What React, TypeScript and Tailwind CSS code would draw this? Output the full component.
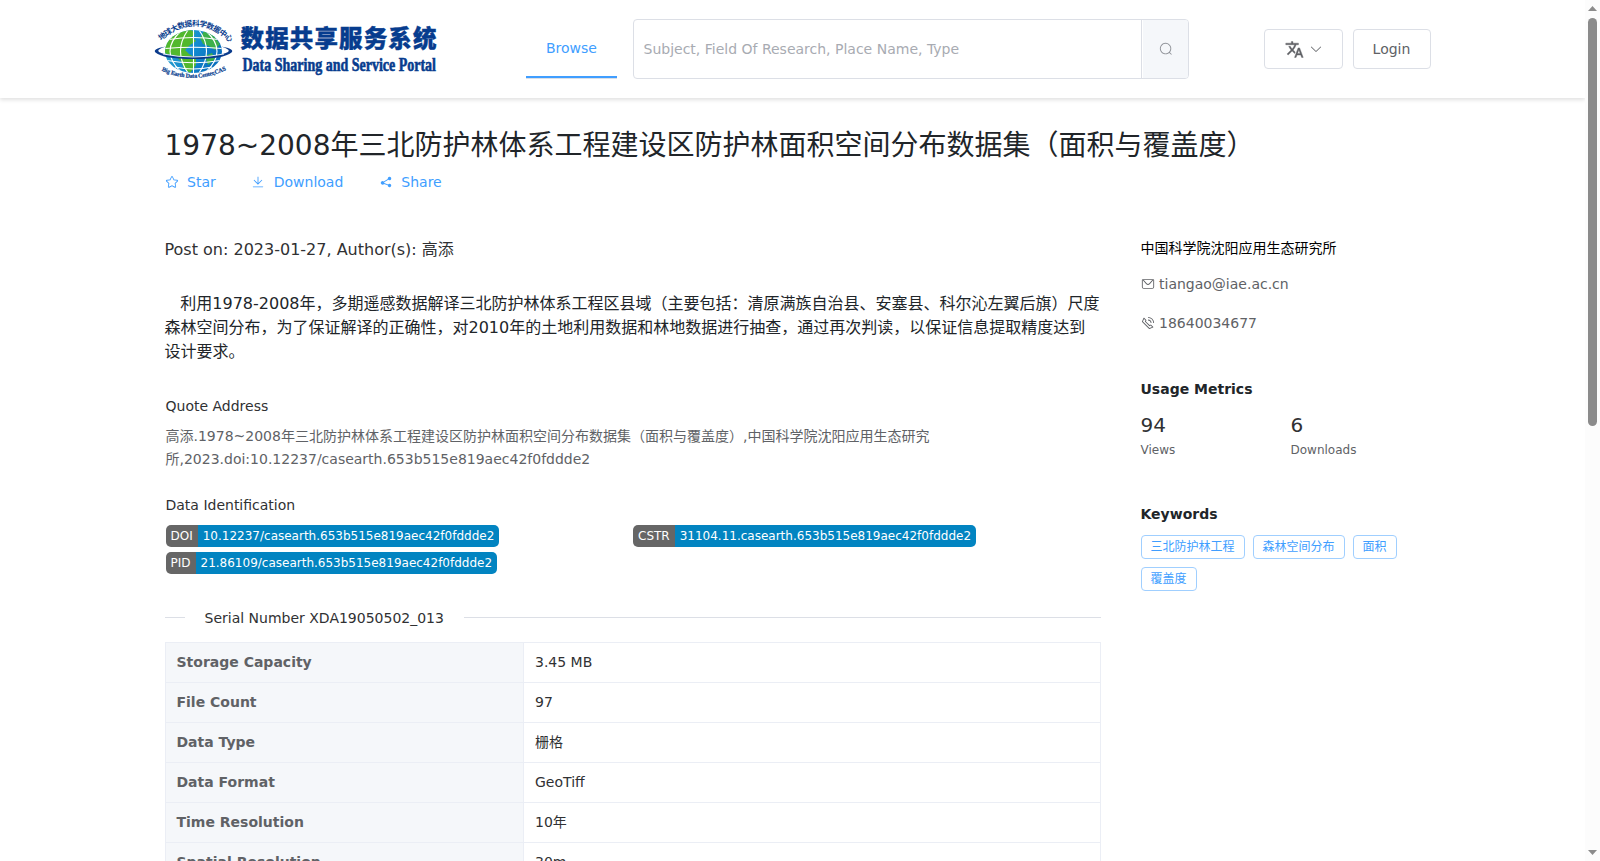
import React from 'react';

interface IconProps {
  d: string[];
  className?: string;
}

const icons = {
  search: ['m795.904 750.72 124.992 124.928a32 32 0 0 1-45.248 45.248L750.656 795.904a416 416 0 1 1 45.248-45.248zM480 832a352 352 0 1 0 0-704 352 352 0 0 0 0 704z'],
  arrowDown: ['M831.872 340.864 512 652.672 192.128 340.864a30.592 30.592 0 0 0-42.752 0 29.12 29.12 0 0 0 0 41.6L489.664 714.24a32 32 0 0 0 44.672 0l340.288-331.712a29.12 29.12 0 0 0 0-41.728 30.592 30.592 0 0 0-42.752 0z'],
  star: ['m512 747.84 228.16 119.936a6.4 6.4 0 0 0 9.28-6.72l-43.52-254.08 184.512-179.904a6.4 6.4 0 0 0-3.52-10.88l-255.104-37.12L517.76 147.904a6.4 6.4 0 0 0-11.52 0L392.192 379.072l-255.104 37.12a6.4 6.4 0 0 0-3.52 10.88L318.08 606.976l-43.584 254.08a6.4 6.4 0 0 0 9.28 6.72L512 747.84zM313.6 924.48a70.4 70.4 0 0 1-102.144-74.24l37.888-220.928L88.96 472.96A70.4 70.4 0 0 1 128 352.896l221.76-32.256 99.2-200.96a70.4 70.4 0 0 1 126.208 0l99.2 200.96 221.824 32.256a70.4 70.4 0 0 1 39.04 120.064L774.72 629.376l37.888 220.928a70.4 70.4 0 0 1-102.144 74.24L512 820.096l-198.4 104.32z'],
  download: ['M160 832h704a32 32 0 1 1 0 64H160a32 32 0 1 1 0-64zm384-253.696 236.288-236.352 45.248 45.248L508.8 704 192 387.2l45.248-45.248L480 584.704V128h64v450.304z'],
  share: ['m679.872 348.8-301.76 188.608a127.808 127.808 0 0 1 5.12 52.16l279.936 104.96a128 128 0 1 1-22.464 59.904l-279.872-104.96a128 128 0 1 1-16.64-166.272l301.696-188.608a128 128 0 1 1 33.92 54.272z'],
  message: [
    'M128 224v512a64 64 0 0 0 64 64h640a64 64 0 0 0 64-64V224H128zm0-64h768a64 64 0 0 1 64 64v512a128 128 0 0 1-128 128H192A128 128 0 0 1 64 736V224a64 64 0 0 1 64-64z',
    'M904 224 656.512 506.88a192 192 0 0 1-289.024 0L120 224h784zm-698.944 0 210.56 240.704a128 128 0 0 0 192.704 0L818.944 224H205.056z',
  ],
  phone: ['M79.36 432.256 591.744 944.64a32 32 0 0 0 35.2 6.784l253.44-108.544a32 32 0 0 0 9.984-52.032l-153.856-153.92a32 32 0 0 0-36.928-6.016l-69.888 34.944L358.08 394.24l35.008-69.888a32 32 0 0 0-5.952-36.928L233.152 133.568a32 32 0 0 0-52.032 10.048L72.512 397.056a32 32 0 0 0 6.784 35.2zm60.48-29.952 81.536-190.08L325.568 316.48l-24.64 49.216-20.608 41.216 32.576 32.64 271.552 271.552 32.64 32.64 41.216-20.672 49.28-24.576 104.192 104.128-190.08 81.472L139.84 402.304zM512 320v-64a256 256 0 0 1 256 256h-64a192 192 0 0 0-192-192zm0-192V64a448 448 0 0 1 448 448h-64a384 384 0 0 0-384-384z'],
};

const Icon: React.FC<IconProps> = ({ d, className }) => (
  <svg viewBox="0 0 1024 1024" fill="currentColor" className={`h-3.5 w-3.5 shrink-0 ${className ?? ''}`}>
    {d.map((path) => (
      <path key={path} d={path} />
    ))}
  </svg>
);

const Logo: React.FC = () => (
  <svg width="284" height="64" viewBox="0 0 284 64" className="shrink-0 overflow-visible">
    <defs>
      <linearGradient id="sea" x1="0" x2="1" y1="0" y2="0.4">
        <stop offset="0" stopColor="#2fa8c8" />
        <stop offset="0.6" stopColor="#128bd0" />
        <stop offset="1" stopColor="#0a6fbd" />
      </linearGradient>
      <clipPath id="globe">
        <ellipse cx="38.5" cy="34.5" rx="28.5" ry="21.5" />
      </clipPath>
      <path id="arcTop" d="M6 24 Q 38.5 -5 71 22 L 80 29.5" />
      <path id="arcBottom" d="M6.5 53.5 Q 38 68.5 71 53 L 80 48" />
    </defs>

    {/* Globe */}
    <ellipse cx="38.5" cy="34.5" rx="28.5" ry="21.5" fill="url(#sea)" />
    <g clipPath="url(#globe)">
      <path d="M8 35 L12 22 L22 14 L35 12 L40 16 L37 20 L41 24 L35 28 L30 33 L34 37 L41 41 L41 48 L35 56 L29 52 L26 44 L19 38 L12 37Z" fill="#52b82c" />
      <path d="M49 14 L58 18 L65 27 L60 33 L54 29 L48 27 L45 21Z" fill="#3db04a" />
      <path d="M50 39 L57 36 L60 42 L53 48Z" fill="#3db04a" />
      <g fill="none" stroke="#fff" strokeWidth="1.1">
        <path d="M14 22.5 Q38.5 18.5 63 22.5 M10 31.5 Q38.5 29 67 31.5 M12 43.5 Q38.5 48 65 43.5 M20 50 Q38.5 54 57 50" />
        <path d="M38.5 12 V57 M33 13 Q18 34 33 56 M44 13 Q59 34 44 56 M26 14 Q4 34 26 55 M51 14 Q73 34 51 55" />
      </g>
    </g>
    <path d="M10.5 29.5 Q-3 32 0.5 35.5 Q8 42 38.5 42 Q69 42 76.5 35.5 Q80 32 66.5 29.5 Q77 33 72.5 35.3 Q64 39.5 38.5 39.5 Q13 39.5 4.5 35.3 Q0 33 10.5 29.5Z" fill="#0b3b8c" />
    <path d="M8 37 Q38 43 69 37" fill="none" stroke="#fff" strokeWidth="0.9" />

    <g fill="#073c8e" fontWeight="700">
      <text fontSize="7.6" fontFamily="'Noto Sans CJK SC', sans-serif">
        <textPath href="#arcTop" textLength="77.5">地球大数据科学数据中心</textPath>
      </text>
      <text fontSize="6" stroke="#073c8e" strokeWidth="0.2" fontFamily="'Liberation Serif', serif">
        <textPath href="#arcBottom" textLength="67">Big Earth Data Center,CAS</textPath>
      </text>
      <text x="85.5" y="29.5" fontSize="23.5" fontWeight="900" textLength="196" stroke="#073c8e" strokeWidth="0.4" fontFamily="'Noto Sans CJK SC', sans-serif">
        数据共享服务系统
      </text>
      <text x="87.5" y="53.5" fontSize="18" textLength="193.5" lengthAdjust="spacingAndGlyphs" stroke="#073c8e" strokeWidth="0.6" fontFamily="'Liberation Serif', serif">
        Data Sharing and Service Portal
      </text>
    </g>
  </svg>
);

const Header: React.FC = () => (
  <header className="flex h-[98px] shrink-0 items-center bg-white pl-[155px] shadow-[0_2px_4px_rgba(0,0,0,0.12)]">
    <Logo />
    <nav className="ml-[87px] h-[60px] w-[91px] border-b border-[#dcdfe6]">
      <a className="flex h-[59px] items-center justify-center border-b-2 border-[#409eff] text-sm text-[#409eff]">Browse</a>
    </nav>

    <div className="ml-4 flex h-[60px] w-[556px] overflow-hidden rounded border border-[#dcdfe6] text-sm">
      <div className="flex flex-1 items-center border-r border-[#dcdfe6] pl-[9.5px] text-[#a8abb2]">
        Subject, Field Of Research, Place Name, Type
      </div>
      <button className="ml-px flex w-[45px] items-center justify-center bg-[#f5f7fa] text-[#909399]">
        <Icon d={icons.search} />
      </button>
    </div>

    <button className="ml-[75px] flex h-10 w-[79px] items-center justify-center rounded border border-[#dcdfe6] text-[#606266]">
      <svg viewBox="0 0 24 24" fill="currentColor" stroke="currentColor" strokeWidth="0.5" className="h-[19px] w-[19px]">
        <path d="M12.87 15.07l-2.54-2.51.03-.03c1.74-1.94 2.98-4.17 3.71-6.53H17V4h-7V2H8v2H1v1.99h11.17C11.5 7.92 10.44 9.75 9 11.35 8.07 10.32 7.3 9.19 6.69 8h-2c.73 1.63 1.73 3.17 2.98 4.56l-5.09 5.02L4 19l5-5 3.11 3.11.76-2.04zM18.5 10h-2L12 22h2l1.12-3h4.75L21 22h2l-4.5-12zm-2.62 7l1.62-4.33L19.12 17h-3.24z" />
      </svg>
      <Icon d={icons.arrowDown} className="ml-[5px]" />
    </button>
    <button className="ml-2.5 h-10 w-[78px] rounded border border-[#dcdfe6] pr-px text-sm text-[#606266]">Login</button>
  </header>
);

const actions = [
  { label: 'Star', icon: icons.star },
  { label: 'Download', icon: icons.download },
  { label: 'Share', icon: icons.share },
];

const identifiers = [
  { type: 'DOI', value: '10.12237/casearth.653b515e819aec42f0fddde2' },
  { type: 'CSTR', value: '31104.11.casearth.653b515e819aec42f0fddde2' },
  { type: 'PID', value: '21.86109/casearth.653b515e819aec42f0fddde2' },
];

const properties = [
  { label: 'Storage Capacity', value: '3.45 MB' },
  { label: 'File Count', value: '97' },
  { label: 'Data Type', value: '栅格' },
  { label: 'Data Format', value: 'GeoTiff' },
  { label: 'Time Resolution', value: '10年' },
  { label: 'Spatial Resolution', value: '30m' },
];

const keywords = ['三北防护林工程', '森林空间分布', '面积', '覆盖度'];

const Dataset: React.FC = () => (
  <section className="w-[936px] shrink-0">
    <p className="leading-6 text-[#303133]">Post on: 2023-01-27, Author(s): 高添</p>
    <p className="mt-[30px] indent-[15.8px] leading-6">
      利用1978-2008年，多期遥感数据解译三北防护林体系工程区县域（主要包括：清原满族自治县、安塞县、科尔沁左翼后旗）尺度森林空间分布，为了保证解译的正确性，对2010年的土地利用数据和林地数据进行抽查，通过再次判读，以保证信息提取精度达到设计要求。
    </p>

    <div className="mt-[31px] pl-px text-sm leading-[23px]">
      <h2 className="text-[#303133]">Quote Address</h2>
      <p className="mt-[7px] w-[790px] text-[#606266]">
        高添.1978~2008年三北防护林体系工程建设区防护林面积空间分布数据集（面积与覆盖度）,中国科学院沈阳应用生态研究所,2023.doi:10.12237/casearth.653b515e819aec42f0fddde2
      </p>
      <h2 className="mt-[23px] text-[#303133]">Data Identification</h2>
      <div className="mt-2 grid grid-cols-2 gap-y-[5px]">
        {identifiers.map((item) => (
          <div key={item.type} className="flex h-[22px] text-xs leading-[22px] text-white">
            <span className="rounded-l-[5px] bg-[#666] px-[5px]">{item.type}</span>
            <span className="rounded-r-[5px] bg-[#0284c1] px-[5px]">{item.value}</span>
          </div>
        ))}
      </div>
    </div>

    <div className="mt-[33px] flex items-center text-sm leading-[22px] text-[#303133]">
      <span className="mb-0.5 h-px w-5 bg-[#dcdfe6]" />
      <span className="px-5">Serial Number XDA19050502_013</span>
      <span className="mb-0.5 h-px flex-1 bg-[#dcdfe6]" />
    </div>

    <table className="mt-[13px] w-full table-fixed border-collapse text-sm leading-[23px]">
      <tbody>
        {properties.map((row) => (
          <tr key={row.label} className="h-10">
            <th className="w-[358px] border border-[#ebeef5] bg-[#f5f7fa] px-[11px] text-left font-bold text-[#606266]">{row.label}</th>
            <td className="border border-[#ebeef5] px-[11.5px] text-[#303133]">{row.value}</td>
          </tr>
        ))}
      </tbody>
    </table>
  </section>
);

const Sidebar: React.FC = () => (
  <aside className="-mt-0.5 ml-10 w-[300px] text-sm">
    <p className="leading-6 text-black">中国科学院沈阳应用生态研究所</p>
    <p className="mt-3 flex items-center leading-6 text-[#606266]">
      <Icon d={icons.message} className="mr-[4.5px]" />
      tiangao@iae.ac.cn
    </p>
    <p className="mt-[15px] flex items-center leading-6 text-[#606266]">
      <Icon d={icons.phone} className="mr-[4.5px]" />
      18640034677
    </p>

    <h2 className="mt-[42px] font-bold leading-6">Usage Metrics</h2>
    <div className="mt-3 flex">
      <div className="w-[150px]">
        <p className="text-xl leading-6 text-[#303133]">94</p>
        <p className="mt-px text-xs leading-6 text-[#606266]">Views</p>
      </div>
      <div>
        <p className="text-xl leading-6 text-[#303133]">6</p>
        <p className="mt-px text-xs leading-6 text-[#606266]">Downloads</p>
      </div>
    </div>

    <h2 className="mt-10 font-bold leading-6">Keywords</h2>
    <div className="mt-[9px] flex flex-wrap gap-2">
      {keywords.map((word) => (
        <span key={word} className="h-6 rounded border border-[#a0cfff] px-[9px] text-xs leading-[22px] text-[#409eff]">{word}</span>
      ))}
    </div>
  </aside>
);

const Scrollbar: React.FC = () => (
  <div className="flex w-[15px] shrink-0 flex-col items-center justify-between bg-[#fcfcfc] py-1.5">
    <div className="flex flex-col items-center gap-[7px]">
      <svg width="9" height="5" viewBox="0 0 9 5" fill="#8b8b8b">
        <path d="M0 5 L4.5 0 L9 5Z" />
      </svg>
      <div className="h-[408px] w-[9px] rounded-full bg-[#8b8b8b]" />
    </div>
    <svg width="9" height="5" viewBox="0 0 9 5" fill="#8b8b8b">
      <path d="M0 0 L4.5 5 L9 0Z" />
    </svg>
  </div>
);

const App: React.FC = () => (
  <div className="flex h-screen overflow-hidden bg-white font-['DejaVu_Sans','Noto_Sans_CJK_SC',sans-serif] text-[#212529]">
    <div className="flex min-w-0 flex-1 flex-col overflow-hidden">
      <Header />
      <main className="pl-[164.5px] pt-7">
        <h1 className="text-[28px] leading-10">1978~2008年三北防护林体系工程建设区防护林面积空间分布数据集（面积与覆盖度）</h1>
        <div className="mt-[5px] flex gap-[35.5px] text-sm leading-[22px] text-[#409eff]">
          {actions.map((action) => (
            <a key={action.label} className="flex items-center gap-[8.5px]">
              <Icon d={action.icon} />
              {action.label}
            </a>
          ))}
        </div>
        <div className="mt-[45px] flex items-start">
          <Dataset />
          <Sidebar />
        </div>
      </main>
    </div>
    <Scrollbar />
  </div>
);

export default App;
